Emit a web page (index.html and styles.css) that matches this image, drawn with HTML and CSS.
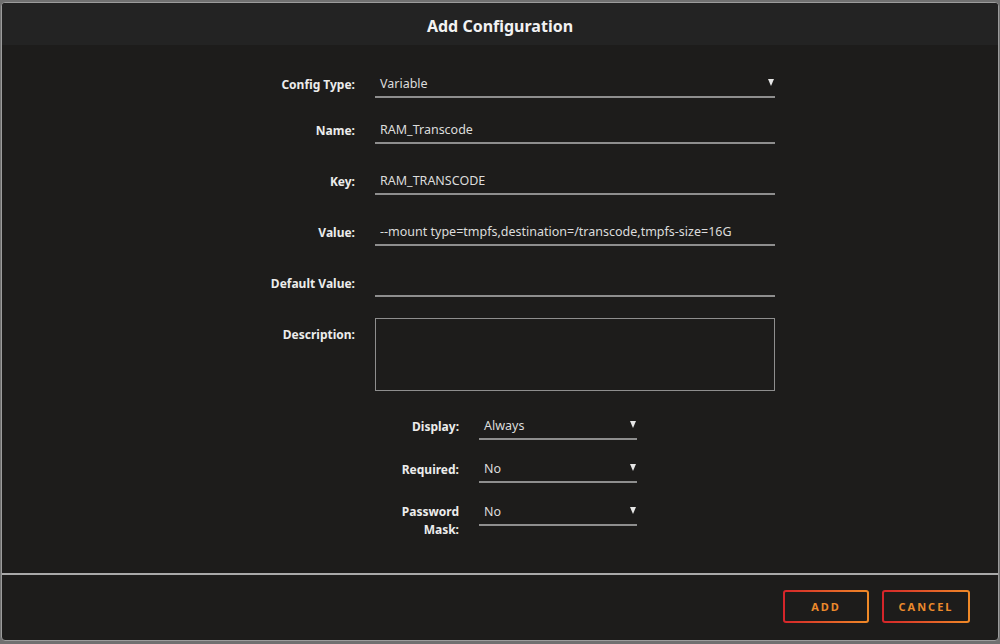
FILE: index.html
```html
<!DOCTYPE html>
<html lang="en">
<head>
    <meta charset="UTF-8">
    <title>Add Configuration</title>
    <link rel="stylesheet" href="styles.css">
</head>
<body>
    <div class="modal">
        <div class="modal-header">
            <h1>Add Configuration</h1>
        </div>
        <div class="modal-body">
            <div class="row row-first">
                <label>Config Type:</label>
                <div class="select"><span>Variable</span><span class="arrow"></span></div>
            </div>
            <div class="row">
                <label>Name:</label>
                <input class="field" type="text" value="RAM_Transcode">
            </div>
            <div class="row">
                <label>Key:</label>
                <input class="field" type="text" value="RAM_TRANSCODE">
            </div>
            <div class="row">
                <label>Value:</label>
                <input class="field" type="text" value="--mount type=tmpfs,destination=/transcode,tmpfs-size=16G">
            </div>
            <div class="row">
                <label>Default Value:</label>
                <input class="field" type="text" value="">
            </div>
            <div class="row row-text">
                <label>Description:</label>
                <textarea class="area"></textarea>
            </div>

            <div class="row small">
                <label>Display:</label>
                <div class="select"><span>Always</span><span class="arrow"></span></div>
            </div>
            <div class="row small">
                <label>Required:</label>
                <div class="select"><span>No</span><span class="arrow"></span></div>
            </div>
            <div class="row small">
                <label class="two-line">Password<br>Mask:</label>
                <div class="select"><span>No</span><span class="arrow"></span></div>
            </div>
        </div>
        <div class="modal-footer">
            <button class="btn">ADD</button>
            <button class="btn btn-cancel">CANCEL</button>
        </div>
    </div>
</body>
</html>
```

FILE: styles.css
```css
* {
    box-sizing: border-box;
}
body {
    font-family: 'Noto Sans', sans-serif;
    background-color: #707070;
    margin: 0;
    padding: 2px 1px 0;
    height: 644px;
    overflow: hidden;
}
.modal {
    height: 639px;
    background-color: #1d1c1b;
    border: 1px solid #9c9c9c;
    border-radius: 4px;
    display: flex;
    flex-direction: column;
    overflow: hidden;
}
.modal-header {
    height: 42px;
    padding-top: 4px;
    background-color: #232323;
    display: flex;
    align-items: center;
    justify-content: center;
}
h1 {
    margin: 0;
    color: #f2f2f2;
    font-size: 16px;
    font-weight: 700;
}
.modal-body {
    flex: 1;
    padding-top: 25px;
}
.row {
    display: grid;
    grid-template-columns: 353px 400px;
    column-gap: 20px;
    align-items: center;
    margin-bottom: 23px;
}
.row-first {
    margin-bottom: 18px;
}
.row-text {
    align-items: start;
    margin-top: -2px;
    margin-bottom: 21px;
}
.row-text label {
    padding-top: 8px;
}
.row.small {
    grid-template-columns: 457px 158px;
    align-items: start;
    margin-bottom: 15px;
}
.row.small label {
    padding-top: 6px;
    line-height: 18px;
}
.row.small label.two-line {
    padding-top: 5px;
}
label {
    text-align: right;
    color: #ececec;
    font-size: 12px;
    font-weight: 700;
}
.field, .select {
    height: 28px;
    border: none;
    border-bottom: 2px solid #8e8e8e;
    background-color: transparent;
    color: #dcdcdc;
    font-family: 'Noto Sans', sans-serif;
    font-size: 12.5px;
    padding: 0 0 0 5px;
    outline: none;
}
.select {
    display: flex;
    align-items: center;
    justify-content: space-between;
    padding-right: 1px;
}
.arrow {
    width: 0;
    height: 0;
    border-left: 3.5px solid transparent;
    border-right: 3.5px solid transparent;
    border-top: 7px solid #e6e6e6;
    margin-top: -2px;
}
.area {
    height: 73px;
    background-color: transparent;
    border: 1px solid #8e8e8e;
    resize: none;
    outline: none;
}
.modal-footer {
    height: 67px;
    border-top: 2px solid #a9a9a9;
    display: flex;
    justify-content: flex-end;
    align-items: flex-start;
    gap: 13px;
    padding: 15px 28px 0 0;
}
.btn {
    width: 86px;
    height: 33px;
    border: 2px solid transparent;
    border-radius: 3px;
    background: linear-gradient(#1d1c1b, #1d1c1b) padding-box,
                linear-gradient(90deg, #d4242a, #f08a27) border-box;
    color: #ec8a2c;
    font-family: 'Noto Sans', sans-serif;
    font-size: 11px;
    font-weight: 700;
    letter-spacing: 2px;
    cursor: pointer;
}
.btn-cancel {
    width: 88px;
}
```
